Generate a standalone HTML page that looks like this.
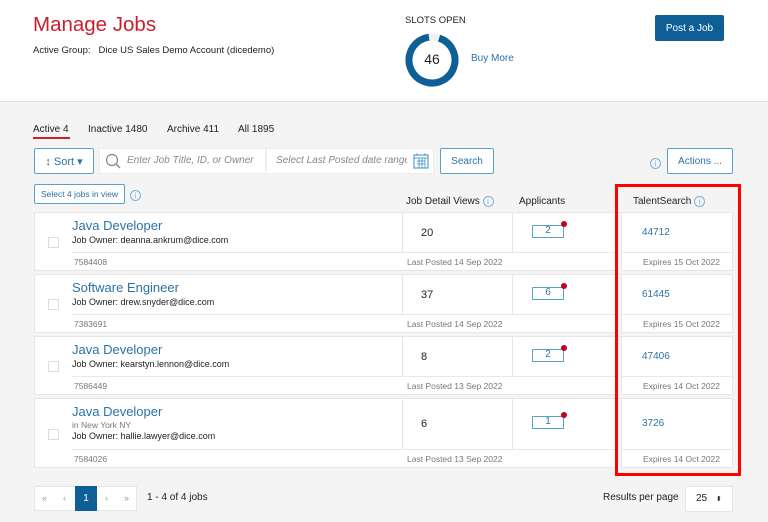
<!DOCTYPE html>
<html><head><style>
*{box-sizing:border-box;margin:0;padding:0}
body{width:768px;height:522px;overflow:hidden;background:#f4f4f4;font-family:"Liberation Sans",Arial,sans-serif;color:#222;position:relative}
.top{position:absolute;left:0;top:0;width:768px;height:102px;background:#fff;border-bottom:1px solid #ddd}
.abs{position:absolute}
.blue{color:#2a73a8}
.card{position:absolute;left:34px;width:699px;background:#fff;border:1px solid #e6e6e6}
.vl{position:absolute;top:0;width:1px;background:#e6e6e6}
.hl{position:absolute;height:1px;background:#e8e8e8}
.title{position:absolute;left:37px;font-size:13px;color:#2a73a8}
.own{position:absolute;left:37px;font-size:9px;color:#222}
.small{position:absolute;font-size:8.5px;color:#777}
.cb{position:absolute;left:13px;width:11px;height:11px;border:1px solid #ddd;background:#fff}
.app{position:absolute;left:497px;width:32px;height:13px;border:1.5px solid #5a9fc8;border-radius:1px;font-size:10px;color:#2a73a8;text-align:center;line-height:10px}
.app:after{content:"";position:absolute;right:-4px;top:-5px;width:6px;height:6px;border-radius:50%;background:#c4001a}
.btn{position:absolute;border:1px solid #5a9fc8;border-radius:2px;background:#fff;color:#2a73a8;font-size:10px;display:flex;align-items:center;justify-content:center}
.info{display:inline-block;width:11px;height:11px;border:1px solid #7fb3d5;border-radius:50%;font-size:8px;color:#7fb3d5;text-align:center;line-height:9px;font-family:"Liberation Serif",serif;vertical-align:middle}
</style></head><body>
<div class="top"></div>
<div class="abs" style="left:33px;top:13px;font-size:20.5px;color:#cc1f2e">Manage Jobs</div>
<div class="abs" style="left:33px;top:45px;font-size:9.5px">Active Group:&nbsp;&nbsp; Dice US Sales Demo Account (dicedemo)</div>
<div class="abs" style="left:405px;top:15px;font-size:9.5px">SLOTS OPEN</div>
<svg class="abs" style="left:404px;top:32px" width="56" height="56"><circle cx="28" cy="28" r="23" fill="none" stroke="#eef1f4" stroke-width="7"/><circle cx="28" cy="28" r="23" fill="none" stroke="#0d5f95" stroke-width="7" stroke-dasharray="134 200" transform="rotate(-72 28 28)"/></svg>
<div class="abs" style="left:404px;top:51px;width:56px;text-align:center;font-size:14px">46</div>
<div class="abs blue" style="left:471px;top:53px;font-size:10px">Buy More</div>
<div class="abs" style="left:655px;top:15px;width:69px;height:26px;background:#0d5f95;color:#fff;font-size:10px;display:flex;align-items:center;justify-content:center;border-radius:2px">Post a Job</div>

<div class="abs" style="left:33px;top:124px;font-size:10px">Active 4</div>
<div class="abs" style="left:33px;top:137px;width:37px;height:2px;background:#cc1f2e"></div>
<div class="abs" style="left:88px;top:124px;font-size:10px">Inactive 1480</div>
<div class="abs" style="left:167px;top:124px;font-size:10px">Archive 411</div>
<div class="abs" style="left:238px;top:124px;font-size:10px">All 1895</div>

<div class="btn" style="left:34px;top:148px;width:60px;height:26px;font-size:11px">↕ Sort ▾</div>
<div class="abs" style="left:99px;top:148px;width:167px;height:26px;background:#fff;border:1px solid #eee"></div>
<svg class="abs" style="left:105px;top:153px" width="16" height="16"><circle cx="7" cy="7" r="5.5" fill="none" stroke="#888" stroke-width="1.2"/><path d="M11 11L15 15" stroke="#888" stroke-width="1.3"/></svg>
<div class="abs" style="left:127px;top:155px;font-size:10px;color:#888;font-style:italic">Enter Job Title, ID, or Owner</div>
<div class="abs" style="left:266px;top:148px;width:168px;height:26px;background:#fff;border:1px solid #eee;overflow:hidden"><span style="position:absolute;left:9px;top:6px;font-size:10px;color:#888;font-style:italic;white-space:nowrap">Select Last Posted date range</span><span style="position:absolute;right:0;top:0;width:26px;height:24px;background:#fff"></span></div>
<svg class="abs" style="left:413px;top:152px" width="16" height="17"><rect x="1" y="3" width="14" height="13" fill="none" stroke="#5a9fc8" stroke-width="1.2"/><path d="M1 6H15M4 1V4M12 1V4M4 9H12M4 12H12M6 6V16M9 6V16M12 6V16" stroke="#5a9fc8" stroke-width="0.9"/></svg>
<div class="btn" style="left:440px;top:148px;width:54px;height:26px">Search</div>
<div class="abs" style="left:650px;top:155px"><span class="info">i</span></div>
<div class="btn" style="left:667px;top:148px;width:66px;height:26px">Actions ...</div>

<div class="btn" style="left:34px;top:184px;width:91px;height:20px;font-size:8.5px">Select 4 jobs in view</div>
<div class="abs" style="left:130px;top:187px"><span class="info">i</span></div>
<div class="abs" style="left:406px;top:196px;font-size:10px">Job Detail Views <span class="info">i</span></div>
<div class="abs" style="left:519px;top:196px;font-size:10px">Applicants</div>
<div class="abs" style="left:633px;top:196px;font-size:10px">TalentSearch <span class="info">i</span></div>

<div class="card" style="top:212px;height:59px">
 <div class="vl" style="left:367px;height:39px"></div><div class="vl" style="left:477px;height:39px"></div><div class="vl" style="left:582px;height:58px;width:5px;background:#f4f4f4;border-left:1px solid #e6e6e6;border-right:1px solid #e6e6e6"></div>
 <div class="hl" style="left:37px;width:545px;top:39px"></div><div class="hl" style="left:587px;width:111px;top:39px"></div>
 <div class="title" style="top:5px">Java Developer</div><div class="own" style="top:22px">Job Owner: deanna.ankrum@dice.com</div>
 <div class="cb" style="top:24px"></div>
 <div class="small" style="left:39px;top:44px">7584408</div>
 <div class="abs" style="left:386px;top:14px;font-size:11px">20</div>
 <div class="app" style="top:12px">2</div>
 <div class="abs blue" style="left:607px;top:14px;font-size:10px">44712</div>
 <div class="small" style="left:372px;top:44px">Last Posted 14 Sep 2022</div>
 <div class="small" style="left:608px;top:44px">Expires 15 Oct 2022</div>
</div>
<div class="card" style="top:274px;height:59px">
 <div class="vl" style="left:367px;height:39px"></div><div class="vl" style="left:477px;height:39px"></div><div class="vl" style="left:582px;height:58px;width:5px;background:#f4f4f4;border-left:1px solid #e6e6e6;border-right:1px solid #e6e6e6"></div>
 <div class="hl" style="left:37px;width:545px;top:39px"></div><div class="hl" style="left:587px;width:111px;top:39px"></div>
 <div class="title" style="top:5px">Software Engineer</div><div class="own" style="top:22px">Job Owner: drew.snyder@dice.com</div>
 <div class="cb" style="top:24px"></div>
 <div class="small" style="left:39px;top:44px">7383691</div>
 <div class="abs" style="left:386px;top:14px;font-size:11px">37</div>
 <div class="app" style="top:12px">6</div>
 <div class="abs blue" style="left:607px;top:14px;font-size:10px">61445</div>
 <div class="small" style="left:372px;top:44px">Last Posted 14 Sep 2022</div>
 <div class="small" style="left:608px;top:44px">Expires 15 Oct 2022</div>
</div>
<div class="card" style="top:336px;height:59px">
 <div class="vl" style="left:367px;height:39px"></div><div class="vl" style="left:477px;height:39px"></div><div class="vl" style="left:582px;height:58px;width:5px;background:#f4f4f4;border-left:1px solid #e6e6e6;border-right:1px solid #e6e6e6"></div>
 <div class="hl" style="left:37px;width:545px;top:39px"></div><div class="hl" style="left:587px;width:111px;top:39px"></div>
 <div class="title" style="top:5px">Java Developer</div><div class="own" style="top:22px">Job Owner: kearstyn.lennon@dice.com</div>
 <div class="cb" style="top:24px"></div>
 <div class="small" style="left:39px;top:44px">7586449</div>
 <div class="abs" style="left:386px;top:14px;font-size:11px">8</div>
 <div class="app" style="top:12px">2</div>
 <div class="abs blue" style="left:607px;top:14px;font-size:10px">47406</div>
 <div class="small" style="left:372px;top:44px">Last Posted 13 Sep 2022</div>
 <div class="small" style="left:608px;top:44px">Expires 14 Oct 2022</div>
</div>
<div class="card" style="top:398px;height:70px">
 <div class="vl" style="left:367px;height:50px"></div><div class="vl" style="left:477px;height:50px"></div><div class="vl" style="left:582px;height:69px;width:5px;background:#f4f4f4;border-left:1px solid #e6e6e6;border-right:1px solid #e6e6e6"></div>
 <div class="hl" style="left:37px;width:545px;top:50px"></div><div class="hl" style="left:587px;width:111px;top:50px"></div>
 <div class="title" style="top:5px">Java Developer</div>
 <div class="own" style="top:21px;color:#777;font-size:8.5px">in New York NY</div>
 <div class="own" style="top:32px">Job Owner: hallie.lawyer@dice.com</div>
 <div class="cb" style="top:30px"></div>
 <div class="small" style="left:39px;top:55px">7584026</div>
 <div class="abs" style="left:386px;top:19px;font-size:11px">6</div>
 <div class="app" style="top:17px">1</div>
 <div class="abs blue" style="left:607px;top:19px;font-size:10px">3726</div>
 <div class="small" style="left:372px;top:55px">Last Posted 13 Sep 2022</div>
 <div class="small" style="left:608px;top:55px">Expires 14 Oct 2022</div>
</div>

<div class="abs" style="left:615px;top:184px;width:126px;height:292px;border:3px solid #f00"></div>

<div class="abs" style="left:34px;top:486px;width:103px;height:25px;background:#fff;border:1px solid #e6e6e6;font-size:9px;color:#999">
 <span class="abs" style="left:7px;top:6px">«</span><span class="abs" style="left:28px;top:6px">‹</span>
 <span class="abs" style="left:40px;top:-1px;width:22px;height:25px;background:#0d5f95;color:#fff;text-align:center;line-height:25px;font-size:10px">1</span>
 <span class="abs" style="left:70px;top:6px">›</span><span class="abs" style="left:89px;top:6px">»</span>
</div>
<div class="abs" style="left:147px;top:492px;font-size:10px">1 - 4 of 4 jobs</div>
<div class="abs" style="left:603px;top:492px;font-size:10px">Results per page</div>
<div class="abs" style="left:685px;top:486px;width:48px;height:26px;background:#fff;border:1px solid #e6e6e6;font-size:10px;line-height:24px;padding-left:10px">25 <span style="font-size:7px;margin-left:6px">⬍</span></div>
</body></html>
